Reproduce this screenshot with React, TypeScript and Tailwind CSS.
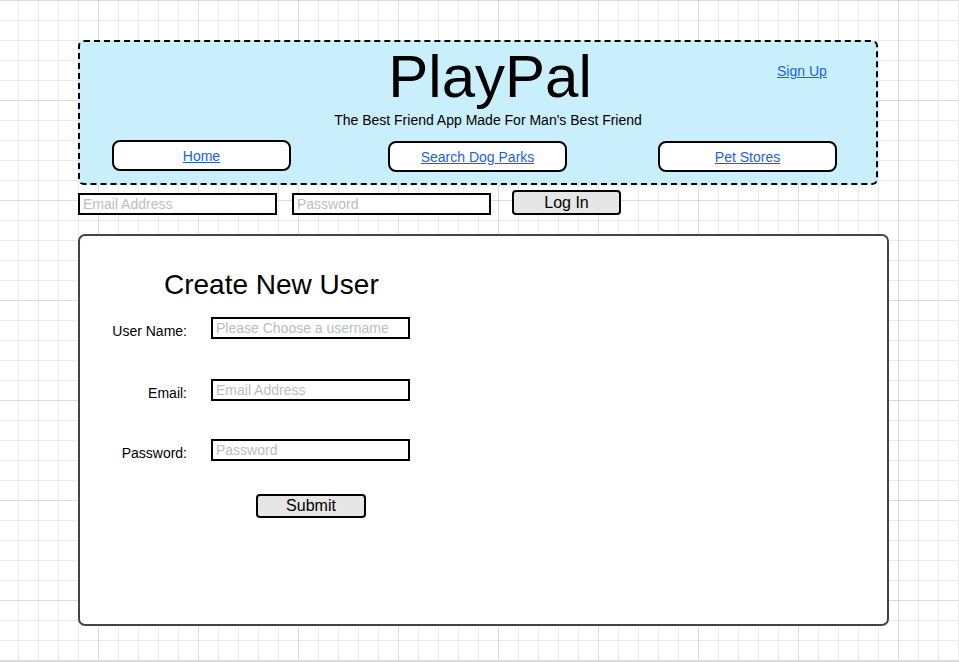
import React from 'react';

const NavButton: React.FC<{ label: string; className?: string }> = ({ label, className = '' }) => (
  <div
    className={`w-[179px] h-[31px] flex items-center justify-center bg-white border-2 border-black rounded-[8px] ${className}`}
  >
    <a href="#" className="text-[14px] leading-[16px] text-[#1b5fe3] underline">
      {label}
    </a>
  </div>
);

const FormRow: React.FC<{ label: string; placeholder: string; type?: string; className?: string }> = ({
  label,
  placeholder,
  type = 'text',
  className = '',
}) => (
  <div className={`flex items-end ${className}`}>
    <label className="w-[107px] text-right text-[14px] leading-[16px] text-black">{label}</label>
    <input
      type={type}
      placeholder={placeholder}
      className="ml-[24px] w-[199px] h-[22px] border-2 border-black bg-white px-[3px] text-[14px] outline-none placeholder:text-[#bdbdbd]"
    />
  </div>
);

const App: React.FC = () => {
  return (
    <div className="w-[959px] h-[662px] overflow-hidden border-b-2 border-[#dadada] bg-white font-['Liberation_Sans',Arial,sans-serif] text-black [background-image:linear-gradient(to_right,#dcdcdc_1px,transparent_1px),linear-gradient(to_bottom,#dcdcdc_1px,transparent_1px),linear-gradient(to_right,#ebebeb_1px,transparent_1px),linear-gradient(to_bottom,#ebebeb_1px,transparent_1px)] [background-size:100px_100px,100px_100px,20px_20px,20px_20px] [background-position:98px_0,0_100px,18px_0,0_20px]">
      <div className="pl-[78px] pt-[40px]">
        {/* header */}
        <div className="w-[800px] h-[145px] border-2 border-dashed border-black rounded-[6px] bg-[#c9effc]">
          <div className="flex">
            <div className="ml-[248px] w-[320px] flex flex-col items-center">
              <h1 className="mt-[5px] ml-[4px] text-[60px] leading-[60px] font-normal">PlayPal</h1>
              <p className="mt-[5px] text-[14px] leading-[16px]">The Best Friend App Made For Man's Best Friend</p>
            </div>
            <a href="#" className="ml-[129px] mt-[21px] h-[16px] text-[14px] leading-[16px] text-[#1b5fe3] underline">
              Sign Up
            </a>
          </div>
          <div className="mt-[12px] flex">
            <NavButton label="Home" className="ml-[32px]" />
            <NavButton label="Search Dog Parks" className="ml-[97px] mt-[1px]" />
            <NavButton label="Pet Stores" className="ml-[91px] mt-[1px]" />
          </div>
        </div>

        {/* login */}
        <div className="mt-[5px] flex items-end">
          <input
            placeholder="Email Address"
            className="w-[199px] h-[22px] border-2 border-black bg-white px-[3px] text-[14px] outline-none placeholder:text-[#bdbdbd]"
          />
          <input
            type="password"
            placeholder="Password"
            className="ml-[15px] w-[199px] h-[22px] border-2 border-black bg-white px-[3px] text-[14px] outline-none placeholder:text-[#bdbdbd]"
          />
          <button className="ml-[21px] w-[109px] h-[25px] border-2 border-black rounded-[4px] bg-[#e6e6e6] text-[16px] leading-[18px]">
            Log In
          </button>
        </div>

        {/* create user card */}
        <div className="mt-[19px] w-[811px] h-[392px] border-2 border-[#444444] rounded-[7px] bg-white pt-[33px]">
          <h2 className="ml-[84px] text-[28px] leading-[32px] font-normal">Create New User</h2>
          <div className="mt-[16px]">
            <FormRow label="User Name:" placeholder="Please Choose a username" />
            <FormRow label="Email:" placeholder="Email Address" className="mt-[40px]" />
            <FormRow label="Password:" placeholder="Password" type="password" className="mt-[38px]" />
          </div>
          <button className="mt-[33px] ml-[176px] w-[110px] h-[24px] border-2 border-black rounded-[4px] bg-[#e6e6e6] text-[16px] leading-[18px]">
            Submit
          </button>
        </div>
      </div>
    </div>
  );
};

export default App;
